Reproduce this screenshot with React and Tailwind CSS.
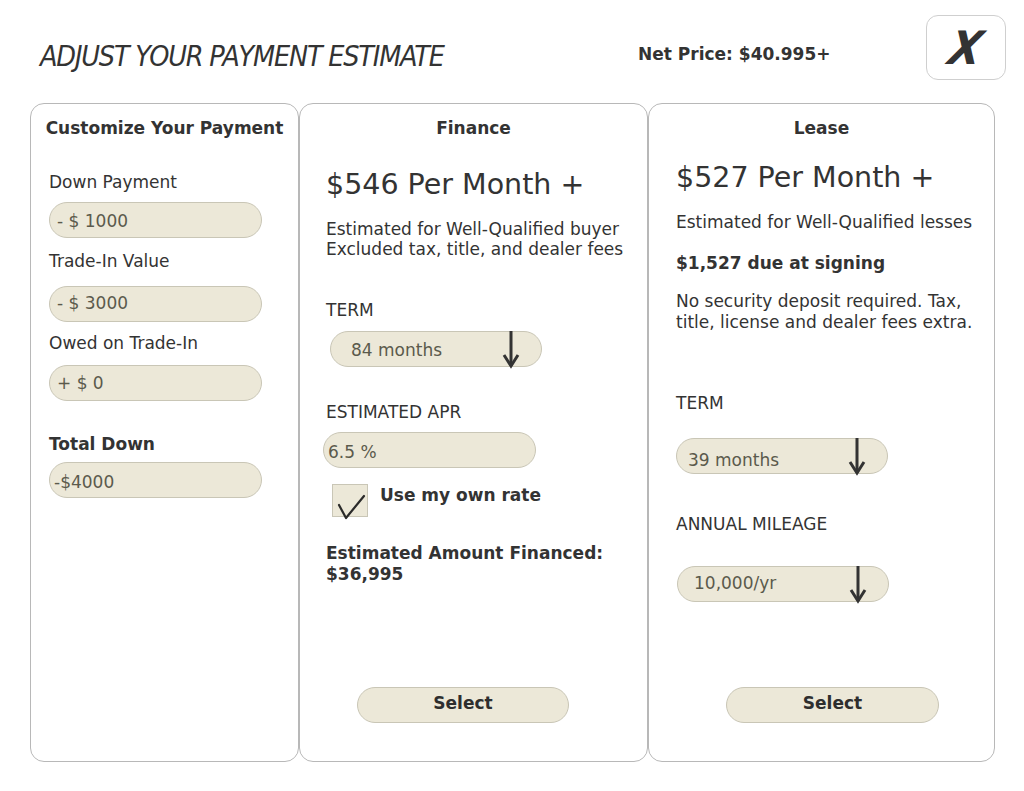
const font = { fontFamily: '"DejaVu Sans", Verdana, sans-serif' };

function Arrow() {
  return (
    <svg width="20" height="38" viewBox="0 0 20 38" className="absolute right-[20px] top-[-1px]">
      <line x1="10" y1="0" x2="10" y2="35" stroke="#333" strokeWidth="3" />
      <polyline points="3,24 10,35 17,24" fill="none" stroke="#333" strokeWidth="3" strokeLinejoin="miter" />
    </svg>
  );
}

function Field({ children, className = '' }) {
  return (
    <div className={`relative flex h-[36px] items-center rounded-[18px] border border-[#c9c6b6] bg-[#ece8d8] text-[17px] text-[#5b5a4c] ${className}`}>
      {children}
    </div>
  );
}

function Label({ children, className = '' }) {
  return <div className={`text-[17px] leading-[24px] text-[#333] ${className}`}>{children}</div>;
}

export default function App() {
  return (
    <div className="relative h-[791px] w-[1024px] overflow-hidden bg-white text-[#333]" style={font}>
      <header className="flex h-[103px] items-start">
        <h1
          className="ml-[40px] mt-[41px] w-[560px] text-[28.5px] font-normal italic leading-[32px] tracking-[-1.2px] text-[#333]"
          style={{ fontFamily: '"DejaVu Sans Condensed", "DejaVu Sans", sans-serif' }}
        >
          ADJUST YOUR PAYMENT ESTIMATE
        </h1>
        <div className="ml-[38px] mt-[42px] w-[250px] text-[17px] font-bold leading-[24px]">Net Price: $40.995+</div>
        <button className="ml-[38px] mt-[15px] flex h-[65px] w-[80px] items-center justify-center rounded-[12px] border border-[#cfcfcf] bg-white">
          <span
            className="inline-block -skew-x-12 text-[46px] font-black italic leading-none text-[#333]"
            style={{ fontFamily: '"DejaVu Sans Condensed", "DejaVu Sans", sans-serif' }}
          >
            X
          </span>
        </button>
      </header>

      <main className="ml-[30px] flex h-[659px]">
        {/* left */}
        <section className="flex w-[269px] flex-col rounded-[14px] border border-[#b8b8b8] pt-[12px]">
          <div className="text-center text-[17px] font-bold leading-[24px]">Customize Your Payment</div>
          <div className="pl-[18px]">
            <Label className="mt-[30px]">Down Payment</Label>
            <Field className="mt-[8px] w-[213px] pl-[7px] pt-[3px]">- $ 1000</Field>
            <Label className="mt-[11px]">Trade-In Value</Label>
            <Field className="mt-[13px] h-[35px] w-[213px] pl-[7px]">- $ 3000</Field>
            <Label className="mt-[9px]">Owed on Trade-In</Label>
            <Field className="mt-[10px] w-[213px] pl-[7px] pt-[1px]">+ $ 0</Field>
            <Label className="mt-[31px] font-bold">Total Down</Label>
            <Field className="mt-[6px] h-[35px] w-[213px] pl-[4px] pt-[6px]">-$4000</Field>
          </div>
        </section>

        {/* finance */}
        <section className="flex w-[349px] flex-col rounded-[14px] border border-[#b8b8b8] pt-[12px] pb-[38px]">
          <div className="text-center text-[17px] font-bold leading-[24px]">Finance</div>
          <div className="flex flex-1 flex-col pl-[26px]">
            <div className="mt-[29px] text-[28.5px] leading-[32px]">$546 Per Month +</div>
            <div className="mt-[18px] text-[17px] leading-[20px]">
              Estimated for Well-Qualified buyer
              <br />
              Excluded tax, title, and dealer fees
            </div>
            <Label className="mt-[39px]">TERM</Label>
            <Field className="ml-[4px] mt-[9px] h-[35px] w-[212px] pl-[20px] pt-[4px]">
              84 months
              <Arrow />
            </Field>
            <Label className="mt-[33px]">ESTIMATED APR</Label>
            <Field className="ml-[-3px] mt-[8px] h-[35px] w-[213px] pl-[4px] pt-[5px]">6.5 %</Field>
            <div className="ml-[6px] mt-[16px] flex items-start">
              <div className="relative h-[33px] w-[36px] border border-[#c9c6b6] bg-[#ece8d8]">
                <svg width="36" height="40" viewBox="0 0 36 40" className="absolute left-0 top-0">
                  <polyline points="6,20 13,33 31,11" fill="none" stroke="#2a2a2a" strokeWidth="2.2" strokeLinecap="round" strokeLinejoin="round" />
                </svg>
              </div>
              <div className="ml-[12px] mt-[-1px] text-[17px] font-bold leading-[24px]">Use my own rate</div>
            </div>
            <div className="mt-[26px] text-[17px] font-bold leading-[21px]">
              Estimated Amount Financed:
              <br />
              $36,995
            </div>
            <button className="ml-[31px] mt-auto h-[36px] w-[212px] rounded-[18px] border border-[#c9c6b6] bg-[#ece8d8] pb-[3px] text-[17px] font-bold text-[#2e2e2e]">
              Select
            </button>
          </div>
        </section>

        {/* lease */}
        <section className="flex w-[347px] flex-col rounded-[14px] border border-[#b8b8b8] pt-[12px] pb-[38px]">
          <div className="text-center text-[17px] font-bold leading-[24px]">Lease</div>
          <div className="flex flex-1 flex-col pl-[27px]">
            <div className="mt-[22px] text-[28.5px] leading-[32px]">$527 Per Month +</div>
            <div className="mt-[18px] text-[17px] leading-[20px]">Estimated for Well-Qualified lesses</div>
            <div className="mt-[21px] text-[17px] font-bold leading-[20px]">$1,527 due at signing</div>
            <div className="mt-[18px] text-[17px] leading-[21px]">
              No security deposit required. Tax,
              <br />
              title, license and dealer fees extra.
            </div>
            <Label className="mt-[58px]">TERM</Label>
            <Field className="mt-[23px] w-[212px] items-end pb-[0px] pl-[11px]">
              39 months
              <Arrow />
            </Field>
            <Label className="mt-[38px]">ANNUAL MILEAGE</Label>
            <Field className="ml-[1px] mt-[30px] w-[212px] pl-[16px]">
              10,000/yr
              <Arrow />
            </Field>
            <button className="ml-[50px] mt-auto h-[36px] w-[213px] rounded-[18px] border border-[#c9c6b6] bg-[#ece8d8] pb-[3px] text-[17px] font-bold text-[#2e2e2e]">
              Select
            </button>
          </div>
        </section>
      </main>
    </div>
  );
}
